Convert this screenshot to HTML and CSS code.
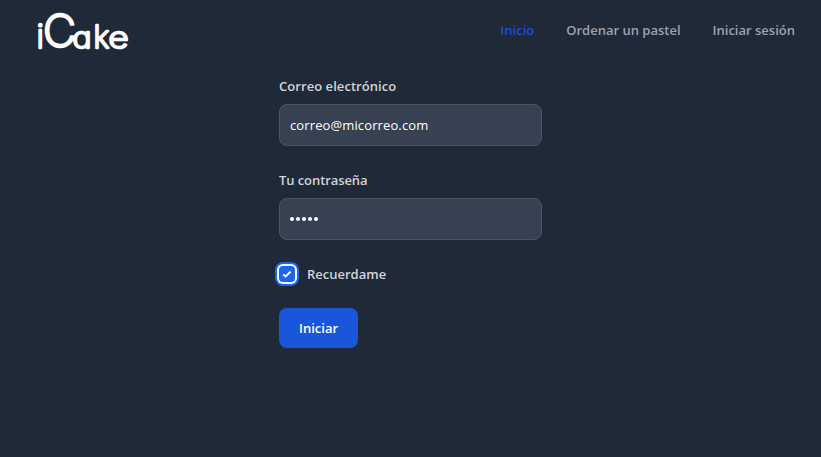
FILE: index.html
```
<!DOCTYPE html>
<html lang="es">
<head>
<meta charset="utf-8">
<title>iCake</title>
<link rel="stylesheet" href="styles.css">
</head>
<body>
<header class="navbar">
  <svg class="logo" width="94" height="44" viewBox="0 0 94 44" role="img" aria-label="iCake">
    <text font-size="33" x="0.5" y="39.5">i</text>
    <text class="cap" font-size="45" x="7" y="38.5" textLength="33" lengthAdjust="spacingAndGlyphs">C</text>
    <text font-size="29" x="36.5" y="39.5" textLength="19" lengthAdjust="spacingAndGlyphs">a</text>
    <text font-size="31" x="57.5" y="39.5">k</text>
    <text font-size="29" x="72.5" y="39.5" textLength="20" lengthAdjust="spacingAndGlyphs">e</text>
  </svg>
  <nav class="links">
    <a class="link active">Inicio</a>
    <a class="link">Ordenar un pastel</a>
    <a class="link">Iniciar sesión</a>
  </nav>
</header>
<form class="login">
  <label class="label" for="email">Correo electrónico</label>
  <input class="field" id="email" type="email" value="correo@micorreo.com">
  <label class="label narrow" for="password">Tu contraseña</label>
  <div class="field dots"><i></i><i></i><i></i><i></i><i></i></div>
  <div class="remember">
    <span class="check"><svg width="16" height="16" viewBox="0 0 16 16"><path d="M4.3 8.4 6.7 10.5 11.6 5.6" fill="none" stroke="#fff" stroke-width="2"/></svg></span>
    <span class="remember-text">Recuerdame</span>
  </div>
  <button class="submit" type="button">Iniciar</button>
</form>
</body>
</html>
```
FILE: styles.css
```
* { box-sizing: border-box; }
body {
  margin: 0;
  height: 457px;
  background: #1f2937;
  font: 600 13px/20px "Open Sans", "Noto Sans", sans-serif;
  color: #d1d5db;
  overflow: hidden;
}
.navbar {
  height: 60px;
  padding: 0 26px 0 36px;
  display: flex;
  align-items: center;
  justify-content: space-between;
}
.logo {
  overflow: visible;
  font-family: Inter, sans-serif;
  font-weight: 200;
  font-feature-settings: "cv11";
  fill: #fff;
  stroke: #fff;
  stroke-width: 2.3;
  stroke-linejoin: round;
}
.logo .cap { stroke-width: 2.5; }
.links { display: flex; gap: 32px; }
.link { color: #9ca3af; }
.link.active { color: #1d4ed8; }
.login { width: 263px; margin: 16px 0 0 279px; }
.label { display: block; height: 20px; margin-bottom: 8px; letter-spacing: 0.06px; }
.label.narrow { letter-spacing: -0.08px; }
.field {
  display: flex;
  align-items: center;
  width: 263px;
  height: 42px;
  margin: 0 0 24px;
  padding: 0 10px;
  border: 1px solid #4b5563;
  border-radius: 8px;
  background: #374151;
  color: #fff;
  font: 400 13px/20px "Open Sans", "Noto Sans", sans-serif;
  letter-spacing: 0.12px;
}
.dots { gap: 2px; }
.dots i { width: 4px; height: 4px; border-radius: 50%; background: #fff; }
.remember { display: flex; align-items: center; height: 20px; margin-bottom: 24px; }
.check {
  width: 16px;
  height: 16px;
  border-radius: 4px;
  background: #1c64f2;
  box-shadow: 0 0 0 2px #fff, 0 0 0 4px #1c64f2;
}
.check svg { display: block; }
.remember-text { margin-left: 12px; }
.submit {
  width: 79px;
  height: 40px;
  padding: 0;
  border: 0;
  border-radius: 8px;
  background: #1a56db;
  color: #fff;
  font: inherit;
}
```
